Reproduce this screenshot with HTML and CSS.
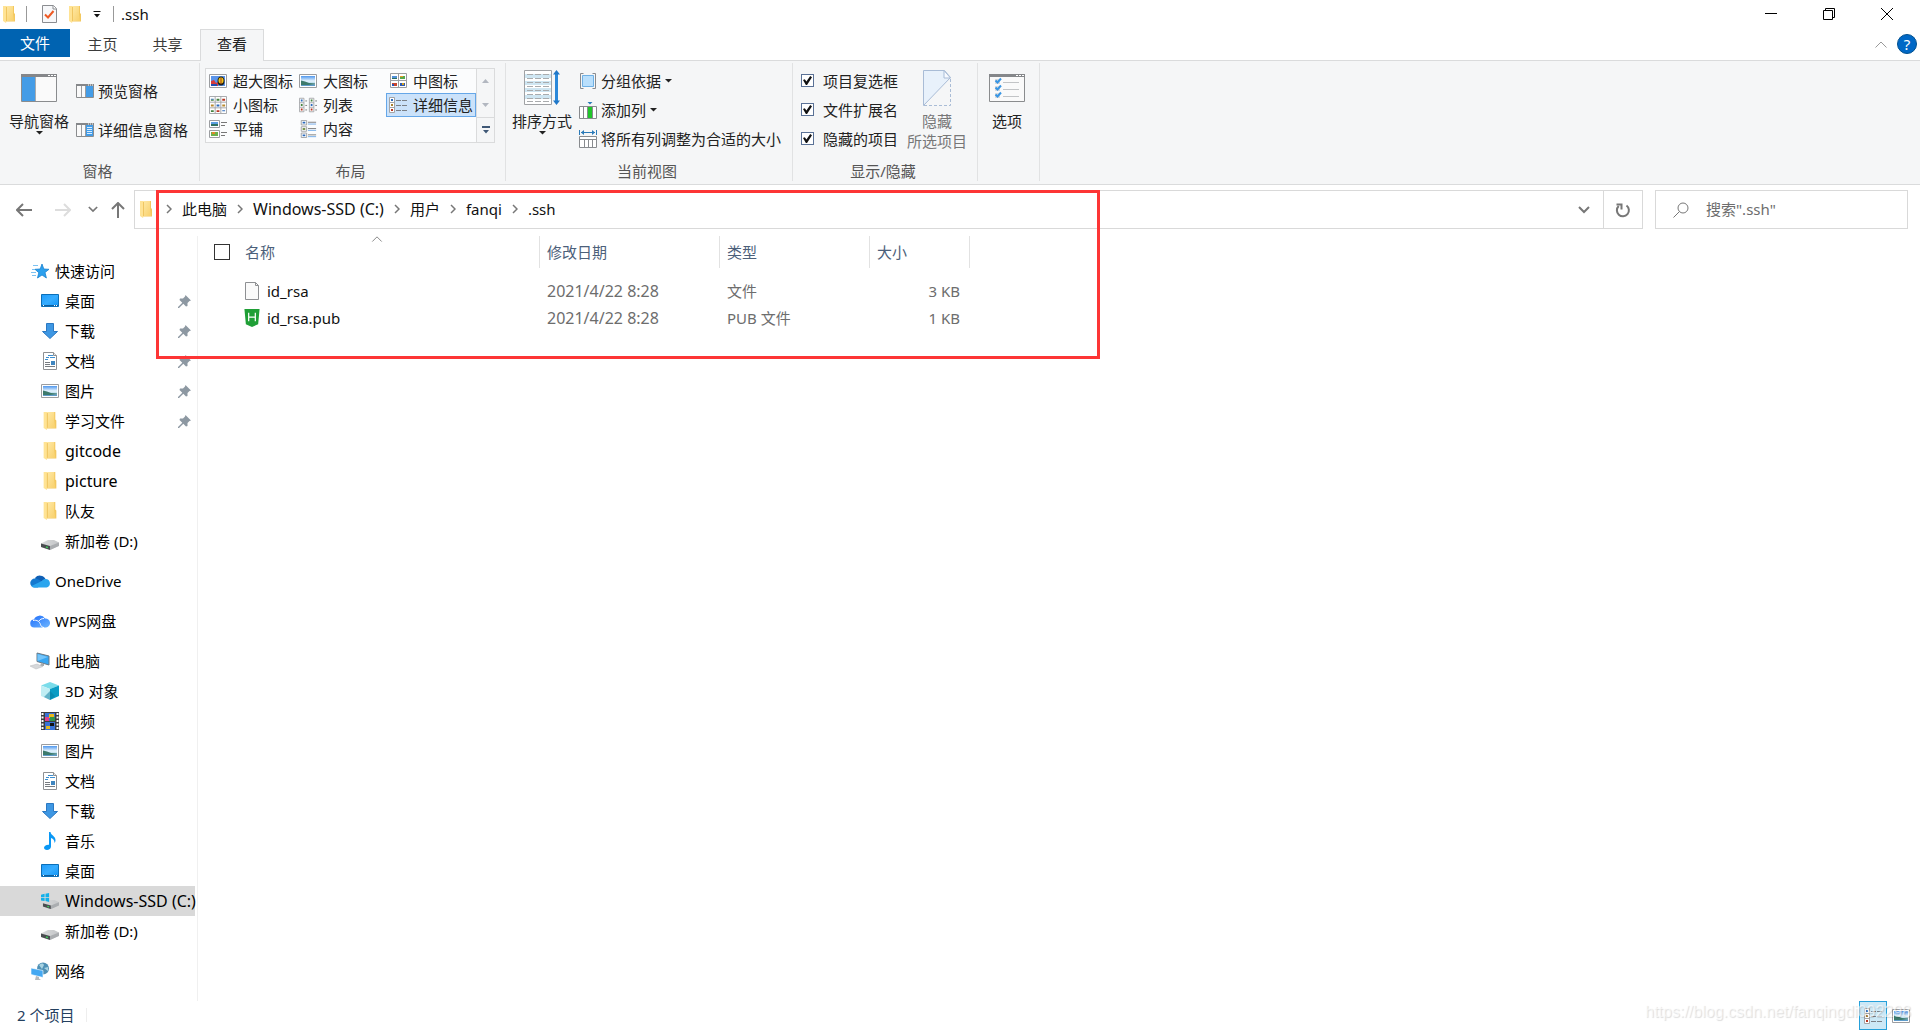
FILE: index.html
```html
<!DOCTYPE html>
<html lang="zh-CN">
<head>
<meta charset="utf-8">
<meta name="viewport" content="width=device-width, initial-scale=1">
<title>.ssh</title>
<link rel="stylesheet" href="styles.css">
</head>
<body>
<svg class="sprite" aria-hidden="true">
  <defs>
    <linearGradient id="g-folder" x1="0" x2="1" y1="0" y2="1"><stop offset="0" stop-color="#ffe9a6"/><stop offset="1" stop-color="#f8d06b"/></linearGradient>
    <linearGradient id="g-sky" x1="0" x2="0" y1="0" y2="1"><stop offset="0" stop-color="#4f97ee"/><stop offset=".5" stop-color="#e6f4fd"/><stop offset=".7" stop-color="#b9dcec"/><stop offset="1" stop-color="#4d8fc4"/></linearGradient>
    <linearGradient id="g-desk" x1="0" x2="1" y1="0" y2="1"><stop offset="0" stop-color="#1e9bfb"/><stop offset=".5" stop-color="#37adff"/><stop offset="1" stop-color="#0f93f5"/></linearGradient>
    <linearGradient id="g-cloud" x1="0" x2="1" y1="0" y2="1"><stop offset="0" stop-color="#1f6dfb"/><stop offset="1" stop-color="#6db6ff"/></linearGradient>
    <linearGradient id="g-drive" x1="0" x2="1"><stop offset="0" stop-color="#d9dadb"/><stop offset="1" stop-color="#c4c6c8"/></linearGradient>
  </defs>
  <symbol id="folder" viewBox="0 0 12 17"><path d="M3 0h8v7l1 1v7.500H3z" fill="#f3c85f"/><path d="M3 0h7v8l1 7H3z" fill="url(#g-folder)"/><path d="M0 0h3l.8 1v13.500L3 17l-3-2z" fill="#ffe394"/><path d="M3.500 1v14" stroke="#e9b94c" stroke-width=".7"/></symbol>
  <symbol id="props" viewBox="0 0 15 18"><path d="M.5.5h11l3 3v14H.5z" fill="#f7f8fa" stroke="#8b8d91"/><path d="M11 .5V4h3.500" fill="#fff" stroke="#8b8d91"/><path d="M3 9.500l3 3L11.500 6" fill="none" stroke="#ee5a24" stroke-width="2"/></symbol>
  <symbol id="qat-arrow" viewBox="0 0 8 7"><path d="M.5.500h7" stroke="#111"/><path d="M1 3h6L4 6.500z" fill="#111"/></symbol>
  <symbol id="caret" viewBox="0 0 7 4"><path d="M0 0h7L3.500 3.500z" fill="#222"/></symbol>
  <symbol id="nav-pane" viewBox="0 0 36 36"><path d="M.5 4.500h35v27H.5z" fill="#fafafa" stroke="#8a8c8e"/><path d="M0 4h36v3H0z" fill="#85878a"/><path d="M27 5.500h2m1 0h2m1 0h2" stroke="#fff"/><path d="M1 7h13v24H1z" fill="#449ce6"/><path d="M14.500 7v24" stroke="#a9abad"/></symbol>
  <symbol id="preview-pane" viewBox="0 0 18 14"><path d="M.5.500h17v13H.5z" fill="#fafafa" stroke="#8a8c8e"/><path d="M0 0h18v2H0z" fill="#85878a"/><path d="M5.500 2v11M9.500 2v11" stroke="#9b9da0"/><path d="M10 2h7v11h-7z" fill="#449ce6"/><path d="M12 1h1m1 0h1m1 0h1" stroke="#fff"/></symbol>
  <symbol id="detail-pane" viewBox="0 0 18 14"><use href="#preview-pane"/><path d="M11 4.500h5M11 6.500h5M11 8.500h5M11 10.500h5" stroke="#d8ecff"/></symbol>
  <symbol id="v-xl" viewBox="0 0 18 18"><path d="M.5 2.500h17v13H.5z" fill="#fff" stroke="#9b9da0"/><path d="M2 4h14v10H2z" fill="#5b95ea"/><path d="M2 9l3-1 2 3 2-1v4H2z" fill="#d63a3a"/><path d="M2 12h6v2H2z" fill="#1f4fb4"/><ellipse cx="12" cy="9" rx="3.500" ry="4.500" fill="#20211a"/><ellipse cx="12" cy="8.500" rx="2.500" ry="3" fill="#f0c419"/><path d="M11.500 6h1v6h-1z" fill="#a33c14"/></symbol>
  <symbol id="v-lg" viewBox="0 0 18 18"><path d="M.5 2.500h17v13H.5z" fill="#fff" stroke="#9b9da0"/><path d="M2 4h14v10H2z" fill="url(#g-sky)"/><path d="M2 8.500l4 1 4 1.500 6 .5v.8l-7 .7H2z" fill="#3d7a6c"/></symbol>
  <symbol id="v-md" viewBox="0 0 18 18"><path d="M1.500 1.500h16v14h-16zM9.500 1.500v14M1.500 8.500h16" fill="#fff" stroke="#9b9da0"/><path d="M3 4h5v2H3z" fill="#4f90d8"/><path d="M3 6h5v1H3z" fill="#2f7160"/><path d="M11 4h5v3h-5z" fill="#58a84c"/><path d="M11 4h3v1h-3z" fill="#e89b2a"/><path d="M3 11h5v3H3z" fill="#c8442c"/><path d="M3 12h2v2H3z" fill="#2654b8"/><path d="M11 11h5v3h-5z" fill="#2c57b0"/><path d="M13 11h2v2h-2z" fill="#d4a11c"/></symbol>
  <symbol id="v-sm" viewBox="0 0 19 19"><path d="M.5.500h18v18H.5zM6.500.500v18M12.500.500v18M.5 6.500h18M.5 12.500h18" fill="#fff" stroke="#a3a5a8"/><path d="M2 3h3v1H2zM8 9h3v2H8zM14 15h3v1h-3z" fill="#2c6bbd"/><path d="M2 4h3v1H2zM8 3h3v2H8zM2 15h3v2H2z" fill="#45823f"/><path d="M14 3h3v2h-3zM8 15h3v2H8z" fill="#b93420"/><path d="M2 9h3v2H2zM14 9h3v2h-3z" fill="#b98a2f"/></symbol>
  <symbol id="v-list" viewBox="0 0 20 18"><path d="M.5 1.500h5v15h-5zM.5 6.500h5M.5 11.500h5M11.500 1.500h5v15h-5zM11.500 6.500h5M11.500 11.500h5" fill="#fff" stroke="#a3a5a8"/><path d="M2 3h2v2H2zM13 8h2v2h-2z" fill="#2c6bbd"/><path d="M2 8h2v2H2zM13 3h2v2h-2z" fill="#45823f"/><path d="M2 13h2v2H2zM13 13h2v2h-2z" fill="#b93420"/><path d="M7 4.500h2M7 9.500h2M7 14.500h2M18 4.500h2M18 9.500h2M18 14.500h2" stroke="#777"/></symbol>
  <symbol id="v-detail" viewBox="0 0 18 18"><path d="M.5 1.500h5v15h-5zM.5 6.500h5M.5 11.500h5" fill="#fff" stroke="#a3a5a8"/><path d="M2 3h2v2H2z" fill="#2c6bbd"/><path d="M2 8h2v2H2z" fill="#a9802f"/><path d="M2 13h2v2H2z" fill="#b93420"/><path d="M7 4.500h5m1 0h5M7 9.500h5m1 0h5M7 14.500h5m1 0h5" stroke="#7b8087"/></symbol>
  <symbol id="v-tile" viewBox="0 0 18 18"><path d="M.5.500h10v7H.5zM.5 10.500h10v7H.5z" fill="#fff" stroke="#9b9da0"/><path d="M2 2h7v2H2z" fill="#5c9ee0"/><path d="M2 4h7v2H2z" fill="#2f7160"/><path d="M2 12h7v4H2z" fill="#6db04c"/><path d="M3 12h3v2H3z" fill="#e0872a"/><path d="M12 2.500h6M12 5.500h4M12 12.500h6M12 15.500h4" stroke="#777"/></symbol>
  <symbol id="v-content" viewBox="0 0 18 20"><path d="M1.500.500h6v5h-6zM1.500 7.500h6v5h-6zM1.500 14.500h6v5h-6z" fill="#fff" stroke="#9b9da0"/><path d="M3 2h3v2H3zM3 16h3v2H3z" fill="#2c6bbd"/><path d="M3 9h3v2H3z" fill="#6d8a3c"/><path d="M9 2.500h9M9 9.500h9M9 16.500h9" stroke="#777"/><path d="M9 4.500h9M9 11.500h9M9 18.500h9" stroke="#6aa7e8"/></symbol>
  <symbol id="more" viewBox="0 0 8 8"><path d="M0 0h8v2H0zM1 4h6L4 7.500z" fill="#3f5876"/></symbol>
  <symbol id="gal-up" viewBox="0 0 7 4"><path d="M0 4h7L3.500 0z" fill="#b2b7c0"/></symbol>
  <symbol id="gal-down" viewBox="0 0 7 4"><path d="M0 0h7L3.500 4z" fill="#b2b7c0"/></symbol>
  <symbol id="sort" viewBox="0 0 36 36"><path d="M.5.500h27v34H.5z" fill="#fff" stroke="#a0a2a5"/><path d="M1 4h26v4H1zM1 11h26v4H1zM1 18h26v4H1zM1 25h26v4H1z" fill="#cfe6f2"/><path d="M3 4.500h6m2 0h6m2 0h6M3 8.500h6m2 0h6m2 0h6M3 12.500h6m2 0h6m2 0h6M3 16.500h6m2 0h6m2 0h6M3 20.500h6m2 0h6m2 0h6M3 24.500h6m2 0h6m2 0h6M3 28.500h6m2 0h6m2 0h6M3 31.500h6m2 0h6m2 0h6" stroke="#a9abad"/><path d="M32.500 2v31" stroke="#2b88d9" stroke-width="3"/><path d="M29 4.500L32.500 0 36 4.500zM29 30.500l3.500 4.500 3.500-4.500z" fill="#1f77c8"/></symbol>
  <symbol id="group-by" viewBox="0 0 18 18"><path d="M4.500 1.500h-3v15h3M13.500 1.500h3v15h-3" fill="none" stroke="#888b8f"/><path d="M3.500 3.500h11v11h-11z" fill="#b9dffc" stroke="#6fb0e4"/></symbol>
  <symbol id="add-col" viewBox="0 0 18 18"><path d="M.5 5.500h17v12H.5zM4.500 5.500v12M8.500 5.500v12M13.500 5.500v12" fill="#fff" stroke="#888b8f"/><path d="M9 6h4v11H9z" fill="#21c52b"/><path d="M8.500 1h5L11 3.500z" fill="#2b7ab8"/></symbol>
  <symbol id="fit-col" viewBox="0 0 18 18"><path d="M.5 0v5M17.500 0v5M2 2.500h14" stroke="#2b7ab8"/><path d="M5 0v5L2 2.500zM13 0v5l3-2.500z" fill="#2b7ab8"/><path d="M.5 6.500h17v11H.5zM.5 9.500h17M5.500 10v7M9.500 10v7M13.500 10v7" fill="#fff" stroke="#888b8f"/></symbol>
  <symbol id="hide" viewBox="0 0 36 36"><path d="M4.500.500h21l6 7-27 28z" fill="#e8f1fb" stroke="#a9bcd6"/><path d="M25 .5v7.500h6.500z" fill="#f7faff" stroke="#a9bcd6"/><path d="M31.500 9v26.500H5" fill="none" stroke="#a9bcd6" stroke-dasharray="3 2"/></symbol>
  <symbol id="options" viewBox="0 0 36 36"><path d="M.5 4.500h35v27H.5z" fill="#fafafa" stroke="#8a8c8e"/><path d="M0 4h36v3H0z" fill="#85878a"/><path d="M27 5.500h2m1 0h2m1 0h2" stroke="#fff"/><path d="M6 9h5v5H6zM6 16h5v5H6zM6 23h5v5H6z" fill="#dcdcdc"/><path d="M6.500 10.500l2 2 3.500-4M6.500 17.500l2 2 3.500-4M6.500 24.500l2 2 3.500-4" fill="none" stroke="#3996e4" stroke-width="2"/><path d="M14 12.500h16M14 19.500h16M14 26.500h16" stroke="#c2c4c6"/></symbol>
  <symbol id="arrow-left" viewBox="0 0 16 14"><path d="M16 7H1.500M7 1L1 7l6 6" fill="none" stroke="currentColor" stroke-width="2"/></symbol>
  <symbol id="arrow-up" viewBox="0 0 14 16"><path d="M7 16V1.500M1 7l6-6 6 6" fill="none" stroke="currentColor" stroke-width="2"/></symbol>
  <symbol id="chev-down" viewBox="0 0 12 8"><path d="M1 1l5 5 5-5" fill="none" stroke="currentColor" stroke-width="2"/></symbol>
  <symbol id="chev-right" viewBox="0 0 6 10"><path d="M1 1l4 4-4 4" fill="none" stroke="currentColor" stroke-width="1.500"/></symbol>
  <symbol id="chev-up" viewBox="0 0 12 7"><path d="M.5 6.500L6 1l5.500 5.500" fill="none" stroke="currentColor"/></symbol>
  <symbol id="refresh" viewBox="0 0 16 16"><path d="M11.500 3.500A6 6 0 1 1 3.700 4" fill="none" stroke="#777" stroke-width="2"/><path d="M1.500 2.500h5v5" fill="none" stroke="#777" stroke-width="2"/></symbol>
  <symbol id="search" viewBox="0 0 16 16"><circle cx="10" cy="6" r="5" fill="none" stroke="#777"/><path d="M6.500 9.500L.5 15.500" stroke="#777"/></symbol>
  <symbol id="star" viewBox="0 0 18 18"><path d="M11 2l1.800 5 5.200.3-4 3.200 1.400 5.500L11 13l-4.500 3 1.300-5.300L4 7.300l5.200-.3z" fill="#2ba0ee" stroke="#1b82cf" stroke-width=".8"/><path d="M2 3.500h5M1 7.500h3M0 10.500h5M1 13.500h4" stroke="#7cc2f2"/></symbol>
  <symbol id="desktop" viewBox="0 0 18 18"><path d="M.5 2.500h17v12H.5z" fill="url(#g-desk)" stroke="#0b6fb8"/><path d="M1 13h16v1H1z" fill="#0f5e9c"/><path d="M2 13.500h1M13 13.500h1m1 0h1" stroke="#fff"/></symbol>
  <symbol id="download" viewBox="0 0 18 18"><path d="M5.500 1.500h7v8h4L9 16.500 1.500 9.500h4z" fill="#3e97e3" stroke="#2b78c2"/></symbol>
  <symbol id="doc" viewBox="0 0 18 18"><path d="M2.500.500h10l3 3v14h-13z" fill="#fff" stroke="#8e9093"/><path d="M12.500.500v3h3" fill="#e7e8ea" stroke="#8e9093"/><path d="M7 3.500h5M5 5.500h3m1 0h5M4 7.500h3" stroke="#3b8ed0"/><path d="M4 10.500h5M4 12.500h5M4 14.500h10" stroke="#777b80"/><path d="M10 9h4v4h-4z" fill="#3f86c0"/></symbol>
  <symbol id="drive" viewBox="0 0 18 18"><path d="M0 11.500L7 8h6l5 2.500v3L9 18l-9-3z" fill="url(#g-drive)"/><path d="M0 11.500l9 2.500v4l-9-3z" fill="#4a4d50"/><path d="M9 14l9-3.500v3.500l-9 4z" fill="#aaadb0"/><path d="M5 15l2 .6" stroke="#3ec95a" stroke-width="1.500"/></symbol>
  <symbol id="windrive" viewBox="0 0 20 18"><g transform="translate(2 0)"><use href="#drive" width="18" height="18"/></g><path d="M0 2l4-1v3.500H0zM5 1l4-1v4.500H5zM0 5.500h4V9L0 8.500zM5 5.500h4V10L5 9z" fill="#12b0ea"/></symbol>
  <symbol id="onedrive" viewBox="0 0 20 14"><path d="M5 4a6 5.500 0 0 1 10.500 1L8 10z" fill="#0f5fb5"/><path d="M4.500 13.500a4.500 4.500 0 0 1 .5-9c3 0 5 2 7 3.500l-4 5.500z" fill="#1479d0"/><path d="M15.500 5a4.300 4.300 0 0 1 1 8.500H4.500C3 13.500 2 13 1.500 12L12 7c1-1.500 2-2 3.500-2z" fill="#2aa5ee"/></symbol>
  <symbol id="wps" viewBox="0 0 20 14"><path d="M4.500 13.500a4 4 0 0 1-.5-8 6 5.500 0 0 1 11-1 4.500 4.500 0 0 1 1 9z" fill="url(#g-cloud)"/><path d="M3 6.500c4-1 6.500 1 7.500 4 .5 2 2 3 3.500 3M9 7c1-1.500 2.500-2.500 5-2.500" fill="none" stroke="#fff"/></symbol>
  <symbol id="pc" viewBox="0 0 20 18"><path d="M7 1l12 3v9L7 9.500z" fill="#37a6f2" stroke="#6b7a86"/><path d="M7.500 2L18 5l-10.500 4z" fill="#74c5fb"/><path d="M11 11l3 1v2h-4z" fill="#a7abae"/><path d="M0 14l7-2 6 2.500L6 17z" fill="#d6d8da" stroke="#b8bbbe" stroke-width=".5"/></symbol>
  <symbol id="cube" viewBox="0 0 18 18"><path d="M9 0l9 3.500-9 3.500-9-3.500z" fill="#7adcea"/><path d="M0 3.500L9 7v11l-9-4z" fill="#c0eef4"/><path d="M18 3.500L9 7v11l9-4z" fill="#0a9cc4"/><path d="M9 9l5 5-5 4-6-3z" fill="#057a9e" opacity=".5"/></symbol>
  <symbol id="video" viewBox="0 0 18 18"><path d="M0 0h18v18H0z" fill="#3c3d3f"/><path d="M1.500 1v17M16.500 1v17" stroke="#fff" stroke-width="2" stroke-dasharray="2 1.500"/><path d="M4 1h10v8H4zM4 10h10v8H4z" fill="#3872d6"/><path d="M4 5h4v4H4z" fill="#e03f8b"/><path d="M8 2h5v4H8z" fill="#ebb91c"/><path d="M9 5h5v4H9z" fill="#33944a"/><path d="M9 11h4v3H9z" fill="#111"/><path d="M5 14h4v3H5z" fill="#e6b71c"/></symbol>
  <symbol id="music" viewBox="0 0 18 18"><path d="M8 0h1.500c.5 3.500 5 4 5 8 0 1.500-.5 2.500-1 3 .3-3-2-4.500-3.500-5v8.500c0 2-2 3.500-4 3.500-2 0-3-1-3-2.200C3 14 5 12.500 8 12.700z" fill="#0a98f5"/></symbol>
  <symbol id="network" viewBox="0 0 18 18"><circle cx="12" cy="6.500" r="6" fill="#4f90b5"/><path d="M8 3c2-2 4-2 5 0l-2 4zM13 6l4-1v4z" fill="#a8d3e2"/><path d="M0 6l12 2.500v7L0 12.500z" fill="#44a8f2" stroke="#fff" stroke-width=".6"/><path d="M5 14l3 1v1.500l2 1.500H4z" fill="#b7babd"/></symbol>
  <symbol id="pin" viewBox="0 0 13 13"><path d="M7.500 0L13 5.500l-1.500.500L9.500 8v3L8 11.500 5.300 8.700 1 13H0v-1l4.300-4.300L1.500 5 2 3.500h3l2-2z" fill="#8d98a2"/></symbol>
  <symbol id="blank" viewBox="0 0 14 18"><path d="M.5.500h10l3 3v14H.5z" fill="#fafafa" stroke="#8e9093"/><path d="M10.500.500v3h3" fill="none" stroke="#8e9093"/></symbol>
  <symbol id="hbuilder" viewBox="0 0 18 19"><path d="M1 0h16l-1.500 16L9 19l-6.500-3z" fill="#1f9f36"/><path d="M5.500 4v9M12.500 4v9M5.500 8.500h7" stroke="#fff" stroke-width="1.300" fill="none"/></symbol>
</svg>

<header class="titlebar">
  <svg class="i-folder"><use href="#folder"/></svg>
  <span class="rule rule-first"></span>
  <button class="qat" aria-label="属性"><svg class="i-props"><use href="#props"/></svg></button>
  <button class="qat" aria-label="新建文件夹"><svg class="i-folder"><use href="#folder"/></svg></button>
  <button class="qat" aria-label="自定义快速访问工具栏"><svg class="i-qat"><use href="#qat-arrow"/></svg></button>
  <span class="rule"></span>
  <h1 class="title">.ssh</h1>
  <div class="window-buttons">
    <button aria-label="最小化"><svg class="i-12" viewBox="0 0 12 12"><path d="M0 5.500h12" stroke="#000"/></svg></button>
    <button aria-label="还原"><svg class="i-12" viewBox="0 0 12 12"><path d="M.5 2.500h9v9h-9zM2.500 2.500v-2h9v9h-2" fill="none" stroke="#000"/></svg></button>
    <button aria-label="关闭"><svg class="i-12" viewBox="0 0 12 12"><path d="M0 0l12 12M12 0L0 12" stroke="#000"/></svg></button>
  </div>
</header>

<nav class="tabs">
  <button class="tab tab-file">文件</button>
  <button class="tab">主页</button>
  <button class="tab">共享</button>
  <button class="tab tab-active">查看</button>
  <div class="tabs-end">
    <button class="collapse" aria-label="最小化功能区"><svg class="i-chev-up"><use href="#chev-up"/></svg></button>
    <button class="help" aria-label="帮助">?</button>
  </div>
</nav>

<section class="ribbon">
  <div class="group group-panes">
    <div class="group-body">
      <button class="big"><svg class="i-36"><use href="#nav-pane"/></svg><span>导航窗格</span><svg class="i-caret"><use href="#caret"/></svg></button>
      <div class="pane-list">
        <button class="small"><svg class="i-pane"><use href="#preview-pane"/></svg>预览窗格</button>
        <button class="small"><svg class="i-pane"><use href="#detail-pane"/></svg>详细信息窗格</button>
      </div>
    </div>
    <h2 class="group-label">窗格</h2>
  </div>
  <div class="group group-layout">
    <div class="group-body">
      <div class="gallery">
        <div class="gallery-items">
          <button><svg class="i-18"><use href="#v-xl"/></svg>超大图标</button>
          <button><svg class="i-18"><use href="#v-lg"/></svg>大图标</button>
          <button><svg class="i-18"><use href="#v-md"/></svg>中图标</button>
          <button><svg class="i-18"><use href="#v-sm"/></svg>小图标</button>
          <button><svg class="i-18"><use href="#v-list"/></svg>列表</button>
          <button class="selected"><svg class="i-18"><use href="#v-detail"/></svg>详细信息</button>
          <button><svg class="i-18"><use href="#v-tile"/></svg>平铺</button>
          <button><svg class="i-18"><use href="#v-content"/></svg>内容</button>
        </div>
        <div class="gallery-scroll">
          <button aria-label="上一行"><svg class="i-caret"><use href="#gal-up"/></svg></button>
          <button aria-label="下一行"><svg class="i-caret"><use href="#gal-down"/></svg></button>
          <button aria-label="更多"><svg class="i-8"><use href="#more"/></svg></button>
        </div>
      </div>
    </div>
    <h2 class="group-label">布局</h2>
  </div>
  <div class="group group-view">
    <div class="group-body">
      <button class="big"><svg class="i-36"><use href="#sort"/></svg><span>排序方式</span><svg class="i-caret"><use href="#caret"/></svg></button>
      <div class="row-list">
        <button class="small"><svg class="i-18"><use href="#group-by"/></svg>分组依据<svg class="i-caret"><use href="#caret"/></svg></button>
        <button class="small"><svg class="i-18"><use href="#add-col"/></svg>添加列<svg class="i-caret"><use href="#caret"/></svg></button>
        <button class="small"><svg class="i-18"><use href="#fit-col"/></svg>将所有列调整为合适的大小</button>
      </div>
    </div>
    <h2 class="group-label">当前视图</h2>
  </div>
  <div class="group group-show">
    <div class="group-body">
      <div class="row-list">
        <label class="check"><input type="checkbox" checked>项目复选框</label>
        <label class="check"><input type="checkbox" checked>文件扩展名</label>
        <label class="check"><input type="checkbox" checked>隐藏的项目</label>
      </div>
      <button class="big" disabled><svg class="i-36"><use href="#hide"/></svg><span>隐藏<br>所选项目</span></button>
    </div>
    <h2 class="group-label">显示/隐藏</h2>
  </div>
  <div class="group group-options">
    <div class="group-body">
      <button class="big"><svg class="i-36"><use href="#options"/></svg><span>选项</span></button>
    </div>
  </div>
</section>

<div class="location">
  <div class="history">
    <button aria-label="后退"><svg class="i-arrow"><use href="#arrow-left"/></svg></button>
    <button class="forward" aria-label="前进" disabled><svg class="i-arrow"><use href="#arrow-left"/></svg></button>
    <button class="recent" aria-label="最近浏览的位置"><svg class="i-recent"><use href="#chev-down"/></svg></button>
    <button class="up" aria-label="上移"><svg class="i-up"><use href="#arrow-up"/></svg></button>
  </div>
  <div class="address">
    <svg class="i-folder"><use href="#folder"/></svg>
    <nav class="crumbs">
      <svg class="i-sep"><use href="#chev-right"/></svg><a href="#">此电脑</a>
      <svg class="i-sep"><use href="#chev-right"/></svg><a class="latin" href="#">Windows-SSD (C:)</a>
      <svg class="i-sep"><use href="#chev-right"/></svg><a href="#">用户</a>
      <svg class="i-sep"><use href="#chev-right"/></svg><a href="#">fanqi</a>
      <svg class="i-sep"><use href="#chev-right"/></svg><a href="#">.ssh</a>
    </nav>
    <button class="address-drop" aria-label="以前的位置"><svg class="i-drop"><use href="#chev-down"/></svg></button>
    <button class="address-refresh" aria-label="刷新"><svg class="i-16"><use href="#refresh"/></svg></button>
  </div>
  <label class="search"><svg class="i-16"><use href="#search"/></svg><input type="search" placeholder="搜索&quot;.ssh&quot;" aria-label="搜索"></label>
</div>

<main class="main">
  <nav class="sidebar">
    <ul>
      <li><a class="root" href="#"><svg class="i-18"><use href="#star"/></svg>快速访问</a></li>
      <li><a href="#"><svg class="i-18"><use href="#desktop"/></svg>桌面<svg class="i-pin"><use href="#pin"/></svg></a></li>
      <li><a href="#"><svg class="i-18"><use href="#download"/></svg>下载<svg class="i-pin"><use href="#pin"/></svg></a></li>
      <li><a href="#"><svg class="i-18"><use href="#doc"/></svg>文档<svg class="i-pin"><use href="#pin"/></svg></a></li>
      <li><a href="#"><svg class="i-18"><use href="#v-lg"/></svg>图片<svg class="i-pin"><use href="#pin"/></svg></a></li>
      <li><a href="#"><svg class="i-18"><use href="#folder"/></svg>学习文件<svg class="i-pin"><use href="#pin"/></svg></a></li>
      <li><a class="latin" href="#"><svg class="i-18"><use href="#folder"/></svg>gitcode</a></li>
      <li><a class="latin" href="#"><svg class="i-18"><use href="#folder"/></svg>picture</a></li>
      <li><a href="#"><svg class="i-18"><use href="#folder"/></svg>队友</a></li>
      <li><a href="#"><svg class="i-18"><use href="#drive"/></svg>新加卷 (D:)</a></li>
    </ul>
    <ul><li><a class="root" href="#"><svg class="i-20"><use href="#onedrive"/></svg>OneDrive</a></li></ul>
    <ul><li><a class="root" href="#"><svg class="i-20"><use href="#wps"/></svg>WPS网盘</a></li></ul>
    <ul>
      <li><a class="root" href="#"><svg class="i-20"><use href="#pc"/></svg>此电脑</a></li>
      <li><a href="#"><svg class="i-18"><use href="#cube"/></svg>3D 对象</a></li>
      <li><a href="#"><svg class="i-18"><use href="#video"/></svg>视频</a></li>
      <li><a href="#"><svg class="i-18"><use href="#v-lg"/></svg>图片</a></li>
      <li><a href="#"><svg class="i-18"><use href="#doc"/></svg>文档</a></li>
      <li><a href="#"><svg class="i-18"><use href="#download"/></svg>下载</a></li>
      <li><a href="#"><svg class="i-18"><use href="#music"/></svg>音乐</a></li>
      <li><a href="#"><svg class="i-18"><use href="#desktop"/></svg>桌面</a></li>
      <li><a class="current latin" href="#"><svg class="i-18"><use href="#windrive"/></svg>Windows-SSD (C:)</a></li>
      <li><a href="#"><svg class="i-18"><use href="#drive"/></svg>新加卷 (D:)</a></li>
    </ul>
    <ul><li><a class="root" href="#"><svg class="i-18"><use href="#network"/></svg>网络</a></li></ul>
  </nav>

  <section class="content">
    <table class="files">
      <colgroup><col class="c-name"><col class="c-date"><col class="c-type"><col class="c-size"></colgroup>
      <thead>
        <tr>
          <th><div class="name-head"><input type="checkbox" aria-label="全选">名称<svg class="i-sorted"><use href="#chev-up"/></svg></div></th>
          <th>修改日期</th><th>类型</th><th>大小</th>
        </tr>
      </thead>
      <tbody>
        <tr><td><div class="file"><svg class="i-18"><use href="#blank"/></svg>id_rsa</div></td><td class="latin">2021/4/22 8:28</td><td>文件</td><td class="size">3 KB</td></tr>
        <tr><td><div class="file"><svg class="i-18"><use href="#hbuilder"/></svg>id_rsa.pub</div></td><td class="latin">2021/4/22 8:28</td><td>PUB 文件</td><td class="size">1 KB</td></tr>
      </tbody>
    </table>
  </section>
</main>

<footer class="status">
  <span class="count">2 个项目</span>
  <div class="view-toggle">
    <button class="on" aria-label="详细信息"><svg class="i-18"><use href="#v-detail"/></svg></button>
    <button aria-label="大缩略图"><svg class="i-18"><use href="#v-lg"/></svg></button>
  </div>
</footer>

<div class="highlight"></div>
<div class="watermark">https://blog.csdn.net/fanqingdi092298</div>
</body>
</html>
```
FILE: styles.css
```css
* { box-sizing: border-box; }

body {
  margin: 0;
  min-height: 100vh;
  position: relative;
  display: flex;
  flex-direction: column;
  background: #fff;
  color: #111;
  font: 15px/20px "Noto Sans", "Noto Sans CJK SC", sans-serif;
}

button, input { font: inherit; color: inherit; }
button { margin: 0; padding: 0; border: 0; background: none; white-space: nowrap; }
a { color: inherit; text-decoration: none; }
h1, h2, ul { margin: 0; padding: 0; font-size: 15px; font-weight: 400; list-style: none; }
svg { display: block; flex: none; }

.latin { font-size: 16px; }

.sprite { position: absolute; width: 0; height: 0; }
.i-8 { width: 8px; height: 8px; }
.i-12 { width: 12px; height: 12px; }
.i-16 { width: 16px; height: 16px; }
.i-18 { width: 18px; height: 18px; }
.i-20 { width: 20px; height: 18px; }
.i-36 { width: 36px; height: 36px; }
.i-folder { width: 12px; height: 17px; }
.i-props { width: 15px; height: 18px; }
.i-qat { width: 8px; height: 7px; }
.i-caret { width: 7px; height: 4px; }
.i-pane { width: 18px; height: 14px; }
.i-arrow { width: 16px; height: 14px; }
.i-up { width: 14px; height: 16px; }
.i-recent { width: 10px; height: 7px; }
.i-drop { width: 12px; height: 8px; }
.i-sep { width: 6px; height: 10px; color: #777; }
.i-pin { width: 13px; height: 13px; margin-left: auto; }
.i-chev-up { width: 12px; height: 7px; }

/* Title bar */
.titlebar { display: flex; align-items: center; height: 29px; padding: 0 4px 1px 3px; }
.rule { width: 1px; height: 16px; background: #999; }
.rule-first { margin: 0 3px 0 11px; }
.qat { margin-left: 12px; }
.qat + .rule { margin-left: 12px; }
.title { margin-left: 7px; }
.window-buttons { display: flex; height: 100%; margin-left: auto; }
.window-buttons button { display: grid; place-items: center; width: 58px; }

/* Tabs */
.tabs { display: flex; height: 31px; }
.tab { width: 65px; height: 31px; padding-bottom: 2px; color: #3b3b3b; }
.tab-file { width: 70px; height: 28px; padding-bottom: 0; background: #0063b1; color: #fff; }
.tab-active {
  width: 64px;
  height: 32px;
  padding-bottom: 4px;
  border: 1px solid #dadbdc;
  border-bottom: 0;
  background: #f5f6f7;
  color: #222;
  position: relative;
}
.tabs-end { display: flex; align-items: center; gap: 10px; margin-left: auto; padding: 0 3px 1px 0; }
.collapse { color: #999; }
.help {
  width: 20px;
  height: 20px;
  border: 1px solid #00508f;
  border-radius: 50%;
  background: #0068c6;
  color: #fff;
  line-height: 18px;
}

/* Ribbon */
.ribbon {
  display: flex;
  padding: 2px 0 3px;
  border: solid #dadbdc;
  border-width: 1px 0;
  background: #f5f6f7;
  color: #222;
}
.group {
  display: flex;
  flex-direction: column;
  flex: none;
  height: 118px;
  border-right: 1px solid #e1e2e3;
}
.group-body { display: flex; flex: 1; }
.group-label { padding-right: 4px; color: #555; text-align: center; line-height: 20px; }
.group-panes { width: 200px; }
.group-panes .group-body { padding-left: 3px; }
.group-layout { width: 306px; }
.group-layout .group-body { padding-left: 5px; }
.group-view { width: 287px; }
.group-show { width: 185px; }
.group-show .group-body { padding-left: 8px; }
.group-options { width: 62px; }

.big {
  display: flex;
  flex-direction: column;
  align-items: center;
  width: 72px;
  padding-top: 7px;
}
.big span { margin-top: 5px; }
.big:disabled { color: #777; }
.group-options .big { width: 58px; }
.small { display: flex; align-items: center; gap: 4px; }
.small .i-pane { margin-left: 1px; }
.pane-list { display: flex; flex-direction: column; gap: 19px; padding-top: 18px; }
.row-list { padding-top: 3px; }
.row-list .small, .check { height: 29px; }
.row-list .small { margin-left: 1px; }

.check { display: flex; align-items: center; gap: 9px; width: 100px; white-space: nowrap; }
.check input {
  appearance: none;
  width: 13px;
  height: 13px;
  margin: 0;
  border: 1px solid #5a7196;
  background: #fff;
  display: grid;
  place-items: center;
}
.check input:checked::before {
  content: "";
  width: 9px;
  height: 9px;
  background: #111;
  clip-path: polygon(0 45%, 20% 35%, 38% 62%, 80% 0, 100% 15%, 45% 100%, 32% 100%);
}

.gallery { display: flex; height: 75px; margin-top: 5px; border: 1px solid #dadbdc; background: #fbfcfd; }
.gallery-items { display: grid; grid-template-columns: repeat(3, 90px); grid-auto-rows: 24px; }
.gallery-items button { display: flex; align-items: center; gap: 6px; padding-left: 3px; }
.gallery-items .selected { padding-left: 2px; border: 1px solid #66a7e8; background: #cbe2fa; }
.gallery-scroll {
  display: grid;
  grid-template-rows: 24px 24px 1fr;
  width: 18px;
  border-left: 1px solid #dadbdc;
  background: #f5f6f7;
}
.gallery-scroll button { display: grid; place-items: center; }
.gallery-scroll button:last-child { border-top: 1px solid #dadbdc; }

/* Location row */
.location { display: flex; padding: 5px 12px 0 0; }
.history { display: flex; align-items: center; width: 134px; padding-left: 16px; color: #777; }
.forward { margin-left: 23px; color: #ddd; }
.forward svg { transform: scaleX(-1); }
.recent { margin-left: 17px; }
.up { margin-left: 13px; }
.address { display: flex; align-items: center; flex: 1; height: 39px; padding-left: 5px; border: 1px solid #d9d9d9; }
.crumbs { display: flex; align-items: center; gap: 10px; margin-left: 14px; padding-bottom: 2px; }
.address-drop, .address-refresh { display: grid; place-items: center; width: 39px; height: 100%; color: #777; }
.address-drop { margin-left: auto; }
.address-refresh { border-left: 1px solid #d9d9d9; }
.search {
  display: flex;
  align-items: center;
  gap: 17px;
  width: 253px;
  margin-left: 12px;
  padding-left: 17px;
  border: 1px solid #d9d9d9;
}
.search input { flex: 1; min-width: 0; padding: 0 0 2px; border: 0; outline: 0; background: none; }
.search input::placeholder { color: #6d6d6d; opacity: 1; }

/* Body */
.main { display: flex; flex: 1; padding-top: 7px; }
.sidebar { width: 198px; padding: 20px 2px 14px 0; border-right: 1px solid #f0f0f0; color: #000; }
.sidebar ul + ul { margin-top: 10px; }
.sidebar a {
  display: flex;
  align-items: center;
  gap: 6px;
  height: 30px;
  padding: 0 4px 0 41px;
  white-space: nowrap;
}
.sidebar .root { padding-left: 31px; }
.sidebar .root .i-20 { margin: 0 -1px; }
.sidebar .current { padding-right: 0; background: #d9d9d9; }

.content { flex: 1; }
.files { width: 772px; table-layout: fixed; border-collapse: separate; border-spacing: 0; color: #6d6d6d; }
.c-name { width: 342px; }
.c-date { width: 180px; }
.c-type { width: 150px; }
.c-size { width: 100px; }
.files th {
  height: 32px;
  padding: 0 7px;
  border-right: 1px solid #e2e2e2;
  color: #4c607a;
  font-weight: 400;
  text-align: left;
}
.files th:first-child { padding: 0 0 0 16px; }
.name-head { position: relative; display: flex; align-items: center; gap: 15px; height: 32px; }
.name-head input { appearance: none; width: 16px; height: 16px; margin: 0; border: 1px solid #333; background: #fff; }
.i-sorted { position: absolute; top: 0; left: 50%; width: 12px; height: 6px; margin-left: -6px; color: #777; }
.files td { height: 27px; padding: 0 7px; }
.files tbody tr:first-child td { height: 36px; padding-top: 9px; }
.files td:first-child { padding-left: 45px; color: #111; }
.files .size { padding-right: 10px; text-align: right; }
.file { display: flex; align-items: center; gap: 6px; }

/* Status bar */
.status { display: flex; align-items: center; height: 29px; padding: 0 5px 0 17px; color: #24405f; }
.count { margin-bottom: 2px; padding-right: 12px; border-right: 1px solid #eee; line-height: 14px; }
.view-toggle { display: flex; height: 100%; margin-left: auto; }
.view-toggle button { display: grid; place-items: center; width: 28px; }
.view-toggle .on { border: 1px solid #26a0da; background: #cce8f6; }

/* Overlays */
.highlight {
  position: absolute;
  top: 190px;
  left: 156px;
  width: 944px;
  height: 169px;
  border: 3px solid #fd3535;
  pointer-events: none;
}
.watermark {
  position: absolute;
  right: 9px;
  bottom: 8px;
  color: rgba(255, 255, 255, .6);
  font: 16px/20px "Liberation Sans", sans-serif;
  text-shadow: 1px 1px 1px rgba(0, 0, 0, .14);
  pointer-events: none;
}
```
